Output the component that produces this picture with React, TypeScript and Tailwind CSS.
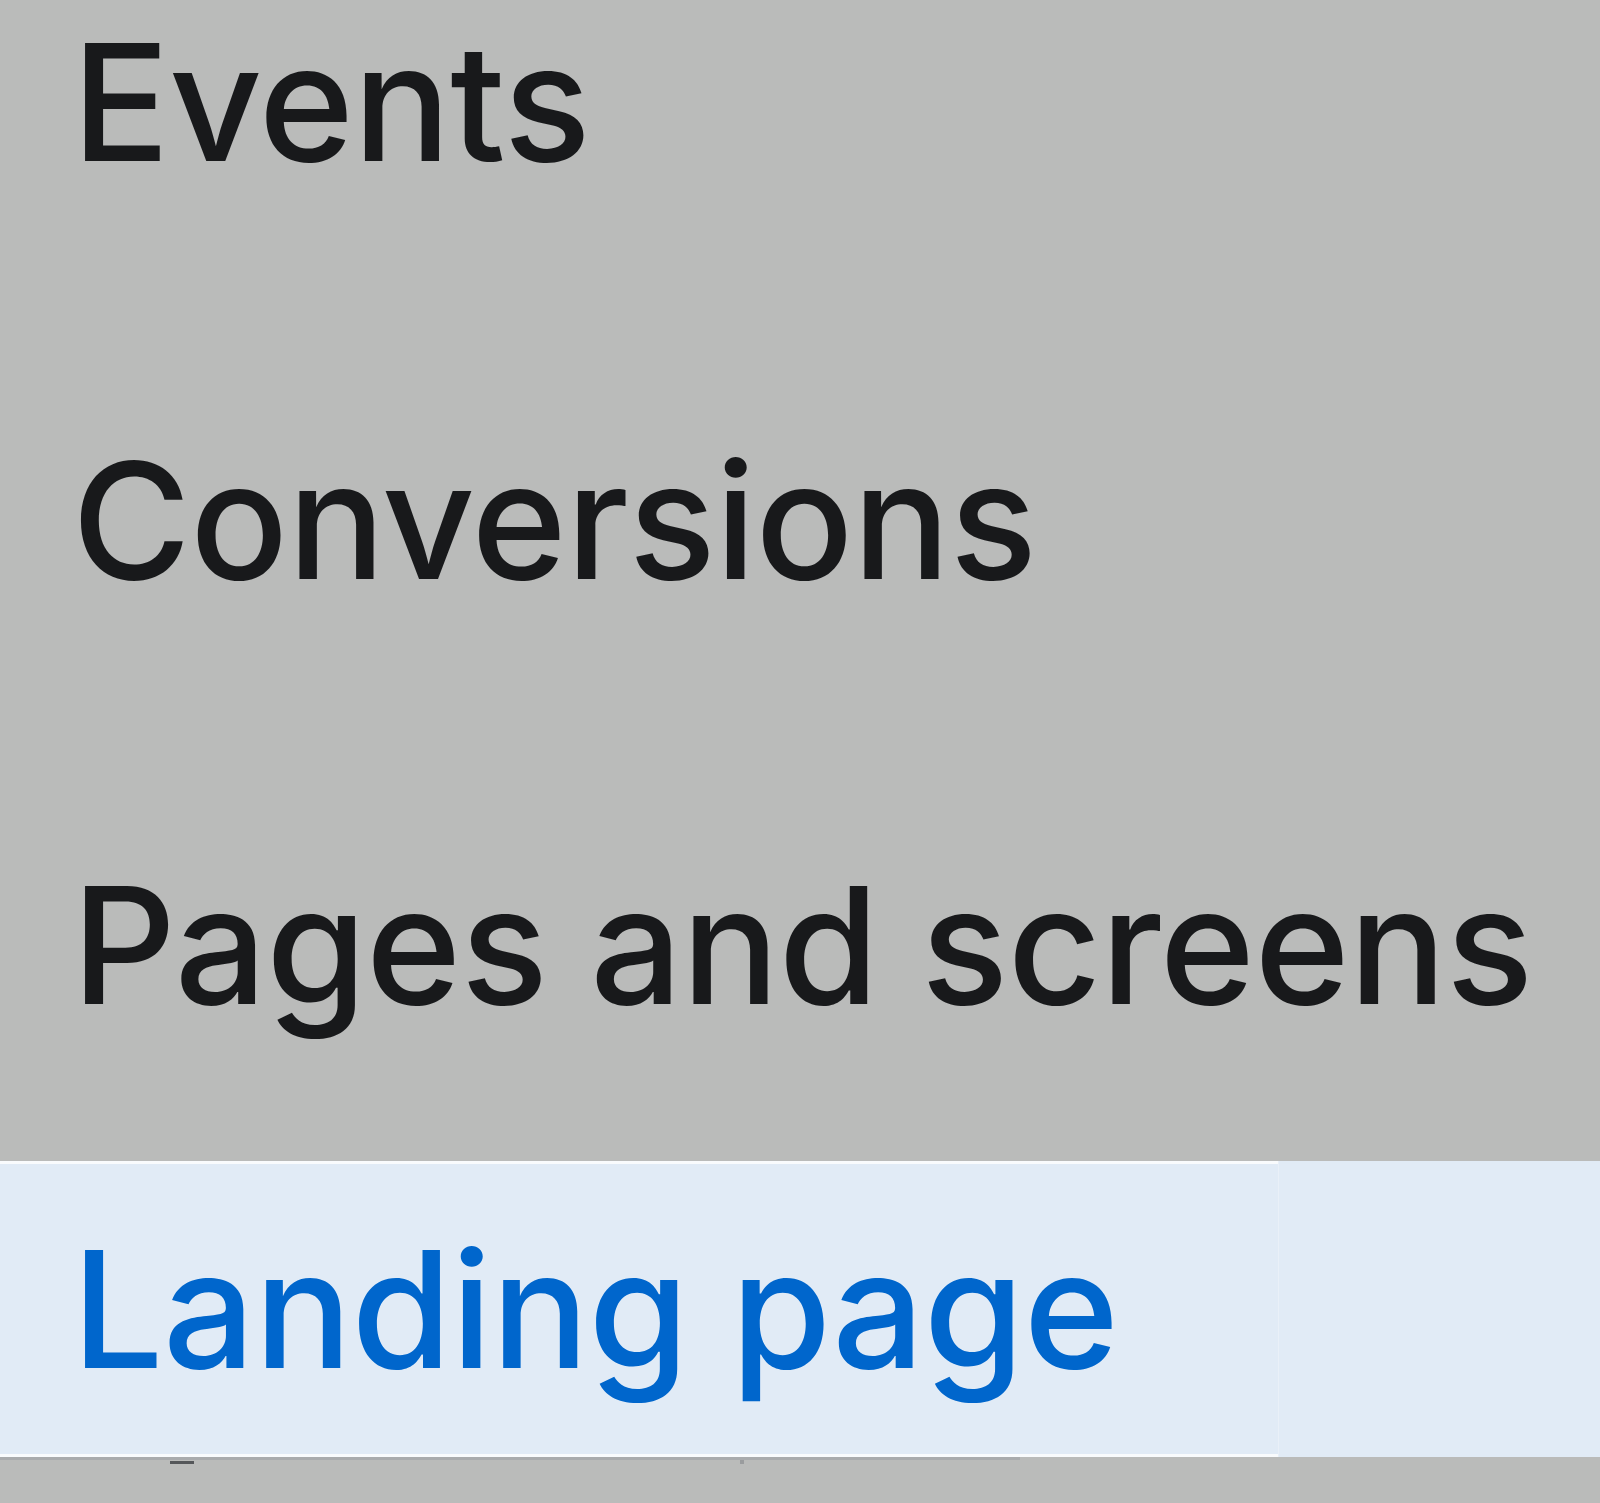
import React from 'react';

const items = ['Events', 'Conversions', 'Pages and screens'];

export default function App() {
  return (
    <div
      className="w-[1600px] h-[1503px] bg-[#babbba] overflow-hidden flex flex-col"
      style={{ fontFamily: 'Inter, "Noto Sans", sans-serif' }}
    >
      <div className="h-[204px] flex items-center pl-[72px]">
        <span className="text-[162px] leading-none font-medium tracking-[-0.5px] text-[#18191b]">{items[0]}</span>
      </div>
      <div className="h-[632px] flex items-center pl-[72px]">
        <span className="text-[162px] leading-none font-medium tracking-[-0.5px] text-[#18191b]">{items[1]}</span>
      </div>
      <div className="h-[218px] flex items-center pl-[72px]">
        <span className="text-[162px] leading-none font-medium tracking-[-0.5px] text-[#18191b]">{items[2]}</span>
      </div>
      <div className="h-[107px]" />
      {/* selected row */}
      <div className="relative h-[296px] flex bg-[#e1ebf6]">
        <div className="w-[1278px] h-full border-t-[3px] border-b-[3px] border-white/80 flex items-center pl-[72px]">
          <span className="text-[162px] leading-none font-medium tracking-[-0.5px] text-[#0066cc]">Landing page</span>
        </div>
        <div className="flex-1 h-full border-l border-[#e9f0f8]" />
      </div>
      <div className="relative flex-1">
        <div className="w-[1020px] h-[3px] bg-[#a9abad]" />
        <div className="absolute left-[170px] top-[4px] w-[24px] h-[3px] bg-[#55575a]" />
        <div className="absolute left-[740px] top-[3px] w-[4px] h-[4px] bg-[#9a9c9e]" />
      </div>
    </div>
  );
}
